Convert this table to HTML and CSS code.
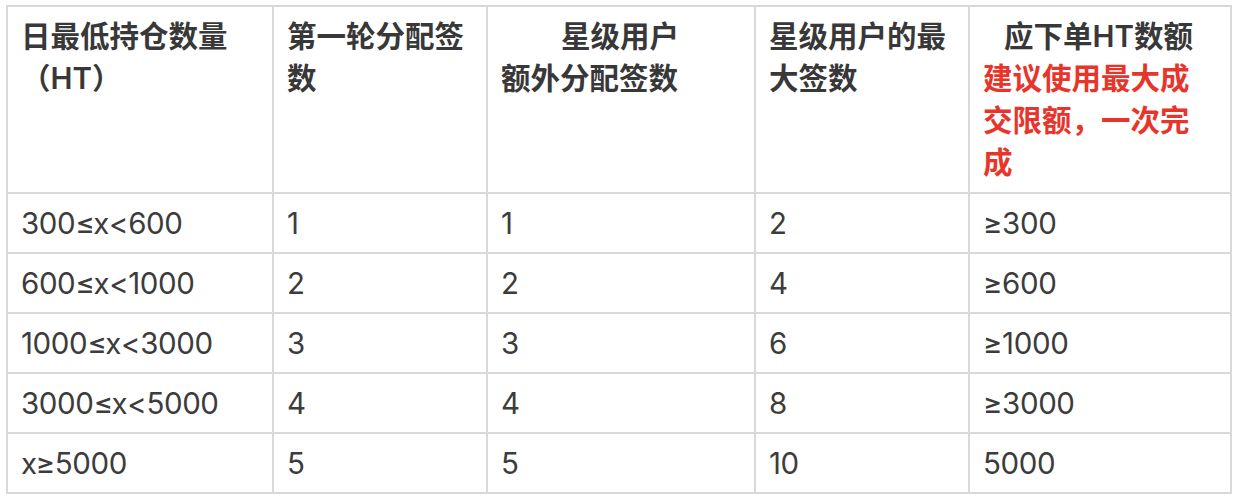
FILE: index.html
```html
<!DOCTYPE html>
<html lang="zh-CN">
<head>
<meta charset="utf-8">
<title>HT 分配签数</title>
<link rel="stylesheet" href="styles.css">
</head>
<body>
<table class="alloc">
  <thead>
    <tr>
      <th class="c1">日最低持仓数量（HT）</th>
      <th class="c2">第一轮分配签数</th>
      <th class="c3"><span class="ind-lg">星级用户</span><br>额外分配签数</th>
      <th class="c4">星级用户的最大签数</th>
      <th class="c5"><span class="ind-sm">应下单HT数额</span><span class="note">建议使用最大成交限额，一次完成</span></th>
    </tr>
  </thead>
  <tbody>
    <tr><td>300≤x&lt;600</td><td>1</td><td>1</td><td>2</td><td>≥300</td></tr>
    <tr><td>600≤x&lt;1000</td><td>2</td><td>2</td><td>4</td><td>≥600</td></tr>
    <tr><td>1000≤x&lt;3000</td><td>3</td><td>3</td><td>6</td><td>≥1000</td></tr>
    <tr><td>3000≤x&lt;5000</td><td>4</td><td>4</td><td>8</td><td>≥3000</td></tr>
    <tr><td>x≥5000</td><td>5</td><td>5</td><td>10</td><td>5000</td></tr>
  </tbody>
</table>
</body>
</html>
```

FILE: styles.css
```css
html, body {
  margin: 0;
  padding: 0;
  background: #ffffff;
}

body {
  font-family: Inter, "Noto Sans CJK SC", sans-serif;
  font-size: 29.5px;
  color: #3c3c3c;
}

.alloc {
  margin: 5px 0 0 6px;
  width: 1226px;
  table-layout: fixed;
  border-collapse: separate;
  border-spacing: 0;
  border-top: 2px solid #d9d9d9;
  border-left: 2px solid #d9d9d9;
}

.alloc th,
.alloc td {
  box-sizing: border-box;
  border-right: 2px solid #d9d9d9;
  border-bottom: 2px solid #d9d9d9;
  padding: 8px 14px 8px 13px;
  line-height: 42px;
  text-align: left;
  vertical-align: top;
}

.alloc th {
  padding-bottom: 9px;
  font-weight: 600;
  color: #383838;
}

.alloc td {
  font-weight: 400;
  letter-spacing: -0.4px;
  vertical-align: middle;
}

.c1 { width: 266px; }
.c2 { width: 214px; }
.c3 { width: 268px; }
.c4 { width: 214px; }
.c5 { width: 262px; padding-right: 20px; }

.ind-lg {
  display: inline-block;
  padding-left: 60px;
}

.ind-sm {
  display: block;
  padding-left: 21px;
}

.note {
  display: block;
  color: #e8352b;
}
```
